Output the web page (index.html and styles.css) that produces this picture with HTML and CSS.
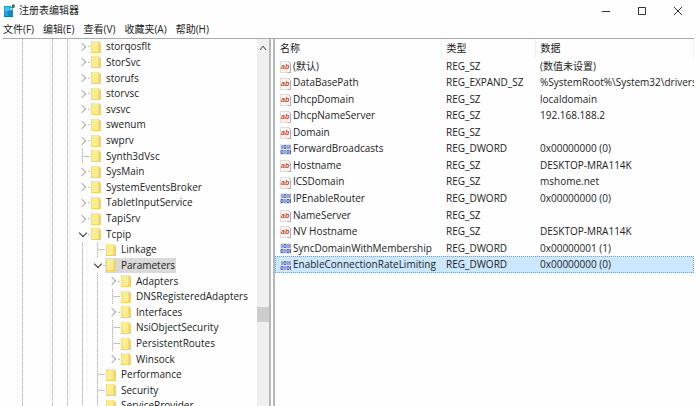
FILE: index.html
```html
<!DOCTYPE html>
<html lang="zh-CN">
<head>
    <meta charset="UTF-8">
    <title>注册表编辑器</title>
    <link rel="stylesheet" href="styles.css">
</head>
<body>
  <svg class="sprite" aria-hidden="true">
    <symbol id="folder" viewBox="0 0 10 14">
      <path d="M0 1h8l2 2v10H0z" fill="#f7de74"/>
      <path d="M1 1h6v11H1z" fill="#fcec90"/>
      <path d="M8 3h2v10H8z" fill="#ecd27a"/>
      <path d="M0 12h10v1H0z" fill="#efd06c"/>
    </symbol>
    <symbol id="string" viewBox="0 0 12 12">
      <path d="M.5.5h8l2 2v9H.5z" fill="#fbf5f2" stroke="#e6dad4"/>
      <path d="M8.500 .5l2 2v9h-3" fill="none" stroke="#b5b0ad"/>
      <text x="1" y="8" font-size="7" font-weight="bold" font-style="italic" font-family="Liberation Sans, sans-serif" fill="#c4482f">ab</text>
    </symbol>
    <symbol id="dword" viewBox="0 0 12 12">
      <path d="M0 0h11v11H0z" fill="#dfe6f6"/>
      <path d="M2 1v4M4 1.500h2v3H4zM8 1v4M10 1v4M1 6.500h2v3H1zM5 6v4M7 6.500h2v3H7zM10.500 6v4" fill="none" stroke="#4a62b0"/>
    </symbol>
  </svg>

  <div class="window">
    <header class="titlebar">
      <svg class="logo" viewBox="0 0 13 14" aria-hidden="true">
        <path d="M1 2h7l2 3v8H1z" fill="#1f9fd6"/>
        <path d="M2 3h4v4H2z" fill="#4fc0e8"/>
        <path d="M5 7h5v5H5z" fill="#1488c0"/>
        <path d="M1 12h9v1H1z" fill="#1b79a8"/>
        <path d="M9 1l2-1 1 2-1 2-2 0z" fill="#456b62"/>
        <path d="M7 4h2v2H7z" fill="#a4dcf0"/>
      </svg>
      <h1>注册表编辑器</h1>
      <div class="controls">
        <button aria-label="最小化"><svg viewBox="0 0 10 10"><path d="M1 5.500h8"/></svg></button>
        <button aria-label="最大化"><svg viewBox="0 0 10 10"><path d="M1.500 1.500h7v7h-7z"/></svg></button>
        <button aria-label="关闭"><svg viewBox="0 0 10 10"><path d="M1 1l8 8M9 1l-8 8"/></svg></button>
      </div>
    </header>

    <nav class="menu">
      <button>文件(F)</button>
      <button>编辑(E)</button>
      <button>查看(V)</button>
      <button>收藏夹(A)</button>
      <button>帮助(H)</button>
    </nav>

    <main class="panes">
      <ul class="tree">
        <li><i class="shut"></i><span><svg><use href="#folder"/></svg>storqosflt</span></li>
        <li><i class="shut"></i><span><svg><use href="#folder"/></svg>StorSvc</span></li>
        <li><i class="shut"></i><span><svg><use href="#folder"/></svg>storufs</span></li>
        <li><i class="shut"></i><span><svg><use href="#folder"/></svg>storvsc</span></li>
        <li><i class="shut"></i><span><svg><use href="#folder"/></svg>svsvc</span></li>
        <li><i class="shut"></i><span><svg><use href="#folder"/></svg>swenum</span></li>
        <li><i class="shut"></i><span><svg><use href="#folder"/></svg>swprv</span></li>
        <li><i class="leaf"></i><span><svg><use href="#folder"/></svg>Synth3dVsc</span></li>
        <li><i class="shut"></i><span><svg><use href="#folder"/></svg>SysMain</span></li>
        <li><i class="shut"></i><span><svg><use href="#folder"/></svg>SystemEventsBroker</span></li>
        <li><i class="shut"></i><span><svg><use href="#folder"/></svg>TabletInputService</span></li>
        <li><i class="shut"></i><span><svg><use href="#folder"/></svg>TapiSrv</span></li>
        <li><i class="open"></i><span><svg><use href="#folder"/></svg>Tcpip</span></li>
        <li><i class="line"></i><i class="leaf"></i><span><svg><use href="#folder"/></svg>Linkage</span></li>
        <li><i class="line"></i><i class="open"></i><span class="current"><svg><use href="#folder"/></svg>Parameters</span></li>
        <li><i class="line"></i><i class="line"></i><i class="shut"></i><span><svg><use href="#folder"/></svg>Adapters</span></li>
        <li><i class="line"></i><i class="line"></i><i class="leaf"></i><span><svg><use href="#folder"/></svg>DNSRegisteredAdapters</span></li>
        <li><i class="line"></i><i class="line"></i><i class="shut"></i><span><svg><use href="#folder"/></svg>Interfaces</span></li>
        <li><i class="line"></i><i class="line"></i><i class="leaf"></i><span><svg><use href="#folder"/></svg>NsiObjectSecurity</span></li>
        <li><i class="line"></i><i class="line"></i><i class="leaf"></i><span><svg><use href="#folder"/></svg>PersistentRoutes</span></li>
        <li><i class="line"></i><i class="line"></i><i class="shut"></i><span><svg><use href="#folder"/></svg>Winsock</span></li>
        <li><i class="line"></i><i class="leaf"></i><span><svg><use href="#folder"/></svg>Performance</span></li>
        <li><i class="line"></i><i class="leaf"></i><span><svg><use href="#folder"/></svg>Security</span></li>
        <li class="cut"><i class="line"></i><i class="line"></i><span><svg><use href="#folder"/></svg>ServiceProvider</span></li>
      </ul>

      <div class="scrollbar">
        <button aria-label="向上滚动"><svg viewBox="0 0 8 8"><path d="M1 6l3-4 3 4"/></svg></button>
        <div class="above"></div>
        <div class="thumb"></div>
        <div class="below"></div>
      </div>

      <section class="values">
        <table>
          <thead>
            <tr><th class="name">名称</th><th class="type">类型</th><th>数据</th></tr>
          </thead>
          <tbody>
            <tr><td><svg><use href="#string"/></svg>(默认)</td><td>REG_SZ</td><td>(数值未设置)</td></tr>
            <tr><td><svg><use href="#string"/></svg>DataBasePath</td><td>REG_EXPAND_SZ</td><td>%SystemRoot%\System32\drivers</td></tr>
            <tr><td><svg><use href="#string"/></svg>DhcpDomain</td><td>REG_SZ</td><td>localdomain</td></tr>
            <tr><td><svg><use href="#string"/></svg>DhcpNameServer</td><td>REG_SZ</td><td>192.168.188.2</td></tr>
            <tr><td><svg><use href="#string"/></svg>Domain</td><td>REG_SZ</td><td></td></tr>
            <tr><td><svg><use href="#dword"/></svg>ForwardBroadcasts</td><td>REG_DWORD</td><td>0x00000000 (0)</td></tr>
            <tr><td><svg><use href="#string"/></svg>Hostname</td><td>REG_SZ</td><td>DESKTOP-MRA114K</td></tr>
            <tr><td><svg><use href="#string"/></svg>ICSDomain</td><td>REG_SZ</td><td>mshome.net</td></tr>
            <tr><td><svg><use href="#dword"/></svg>IPEnableRouter</td><td>REG_DWORD</td><td>0x00000000 (0)</td></tr>
            <tr><td><svg><use href="#string"/></svg>NameServer</td><td>REG_SZ</td><td></td></tr>
            <tr><td><svg><use href="#string"/></svg>NV Hostname</td><td>REG_SZ</td><td>DESKTOP-MRA114K</td></tr>
            <tr><td><svg><use href="#dword"/></svg>SyncDomainWithMembership</td><td>REG_DWORD</td><td>0x00000001 (1)</td></tr>
            <tr class="selected"><td><svg><use href="#dword"/></svg>EnableConnectionRateLimiting</td><td>REG_DWORD</td><td>0x00000000 (0)</td></tr>
          </tbody>
        </table>
      </section>
    </main>
  </div>
</body>
</html>
```
FILE: styles.css
```css
* {
    box-sizing: border-box;
}
body {
    margin: 0;
    background: #fefefe;
    color: #222;
    font: 10px/15px "Open Sans", "Noto Sans CJK SC", sans-serif;
}
button {
    padding: 0;
    border: 0;
    background: none;
    color: inherit;
    font: inherit;
}
.sprite {
    position: absolute;
    width: 0;
    height: 0;
}
.window {
    display: flex;
    flex-direction: column;
    height: 100vh;
    padding: 0 6px 0 3px;
    overflow: hidden;
}

/* title bar and menu */
.titlebar {
    display: flex;
    align-items: center;
    height: 21px;
    flex: none;
}
.logo {
    width: 13px;
    height: 14px;
    margin-right: 3px;
}
h1 {
    margin: 0;
    font-size: 10px;
    font-weight: normal;
}
.controls {
    display: flex;
    gap: 26px;
    margin-left: auto;
    padding-right: 11px;
}
.controls button {
    width: 10px;
    height: 10px;
}
.controls svg {
    display: block;
    fill: none;
    stroke: #333;
}
.menu {
    display: flex;
    gap: 9px;
    height: 18px;
    flex: none;
    border-bottom: 1px solid #aaa;
}

/* key tree */
.panes {
    display: flex;
    flex: 1;
    min-height: 0;
}
.tree {
    --dots: repeating-linear-gradient(#b4b4b4 0 1px, #e6e6e6 1px 2px);
    display: grid;
    grid-template-rows: repeat(23, minmax(0, 2fr)) minmax(0, 1fr);
    width: 254px;
    margin: 0;
    padding: 0 0 0 72px;
    overflow: hidden;
    list-style: none;
    background:
        var(--dots) 19px 0 / 1px 100% no-repeat,
        var(--dots) 49px 0 / 1px 100% no-repeat,
        var(--dots) 64px 0 / 1px 100% no-repeat;
}
.tree li {
    display: flex;
    align-items: center;
}
.tree .cut {
    align-items: flex-start;
}
.tree i {
    width: 15px;
    height: 100%;
    background: var(--dots) 7px 0 / 1px 100% no-repeat;
}
.tree .leaf {
    background:
        var(--dots) 7px 0 / 1px 100% no-repeat,
        linear-gradient(#c4c4c4, #c4c4c4) 7px 50% / 8px 1px no-repeat;
}
.tree .shut,
.tree .open {
    display: flex;
    align-items: center;
    padding-left: 4px;
    background: linear-gradient(#c4c4c4, #c4c4c4) 13px 50% / 2px 1px no-repeat;
}
.shut::before,
.open::before {
    content: "";
    width: 5px;
    height: 5px;
    border: solid #aaa;
    border-width: 1px 1px 0 0;
    transform: rotate(45deg);
}
.open::before {
    margin: 0 0 2px 1px;
    border-color: #333;
    border-width: 0 1px 1px 0;
}
.tree span {
    display: flex;
    align-items: center;
    gap: 5px;
    padding: 0 1px;
}
.tree span svg {
    width: 10px;
    height: 14px;
}
.tree .current {
    background: #d9d9d9;
}

.scrollbar {
    display: flex;
    flex-direction: column;
    width: 12px;
    background: #f0f0f0;
}
.scrollbar button {
    height: 17px;
}
.scrollbar svg {
    display: block;
    width: 8px;
    height: 8px;
    margin: auto;
    fill: none;
    stroke: #444;
}
.above {
    flex: 3;
}
.thumb {
    height: 15px;
    background: #cdcdcd;
}
.below {
    flex: 1;
}

/* value list */
.values {
    flex: 1;
    min-width: 0;
    overflow: hidden;
    border-left: 6px double #b4b9c0;
}
table {
    width: 100%;
    height: 234px;
    border-collapse: collapse;
    table-layout: fixed;
}
.name {
    width: 166px;
}
.type {
    width: 94px;
}
th,
td {
    padding: 0 0 0 5px;
    overflow: hidden;
    font-weight: normal;
    text-align: left;
    white-space: nowrap;
}
th {
    height: 19px;
    border-right: 1px solid #f0f0f0;
}
td:last-child {
    overflow: visible;
}
td svg {
    width: 12px;
    height: 12px;
    margin-right: 1px;
    vertical-align: middle;
}
.selected {
    background: #cce8ff;
    outline: 1px dotted #7d9fb8;
    outline-offset: -1px;
}
```
